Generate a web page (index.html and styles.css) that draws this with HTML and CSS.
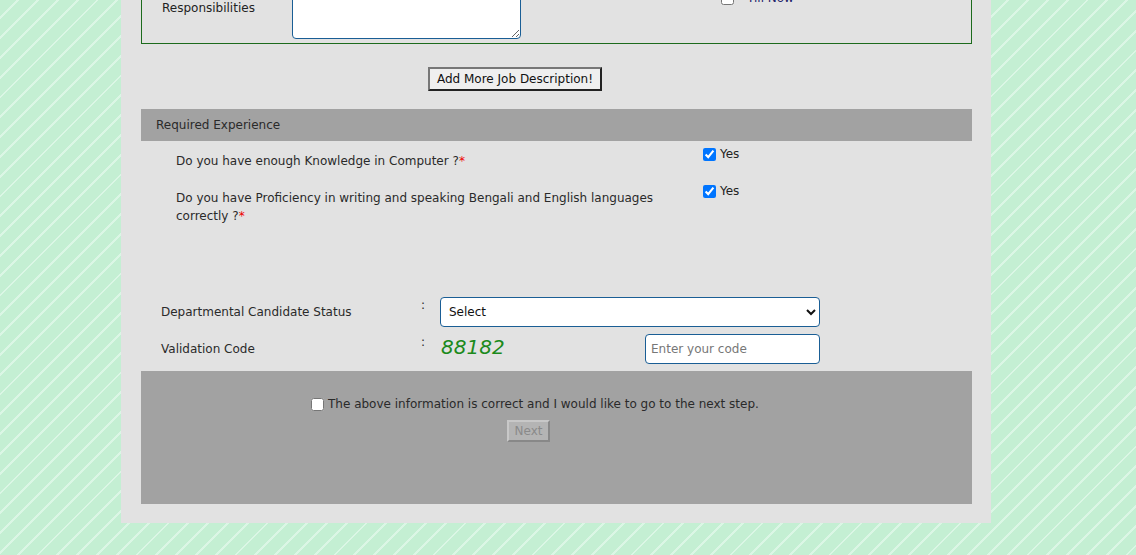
FILE: index.html
```html
<!DOCTYPE html>
<html>
<head>
<meta charset="utf-8">
<link rel="stylesheet" href="styles.css">
</head>
<body>
<div class="page">
  <div class="jobbox">
    <div class="job-row">
      <label class="job-label">Responsibilities</label>
      <textarea class="job-text"></textarea>
      <label class="till"><input type="checkbox" class="till-box"><span class="till-text">Till Now</span></label>
    </div>
  </div>

  <div class="add-row">
    <button class="add-btn">Add More Job Description!</button>
  </div>

  <div class="band">Required Experience</div>

  <div class="q-row q-first">
    <div class="q-text">Do you have enough Knowledge in Computer ?<span class="req">*</span></div>
    <label class="q-ans"><input type="checkbox" checked><span>Yes</span></label>
  </div>
  <div class="q-row">
    <div class="q-text">Do you have Proficiency in writing and speaking Bengali and English languages correctly ?<span class="req">*</span></div>
    <label class="q-ans"><input type="checkbox" checked><span>Yes</span></label>
  </div>

  <div class="form-rows">
    <div class="f-row">
      <div class="f-label">Departmental Candidate Status</div>
      <div class="f-colon">:</div>
      <select class="f-select"><option>Select</option></select>
    </div>
    <div class="f-row">
      <div class="f-label">Validation Code</div>
      <div class="f-colon">:</div>
      <div class="captcha">88182</div>
      <input class="code-input" type="text" placeholder="Enter your code">
    </div>
  </div>

  <div class="submit-panel">
    <label class="agree"><input type="checkbox"><span>The above information is correct and I would like to go to the next step.</span></label>
    <div class="next-row"><button class="next-btn" disabled>Next</button></div>
  </div>
</div>
</body>
</html>
```

FILE: styles.css
```css
html, body {
  margin: 0;
  padding: 0;
}
body {
  background-color: #c4efd3;
  background-image: repeating-linear-gradient(135deg, #c4efd3 0px, #c4efd3 12px, #dbf6e5 12px, #dbf6e5 14px);
  font-family: "DejaVu Sans", Verdana, sans-serif;
  font-size: 12px;
  color: #222;
  overflow: hidden;
  height: 555px;
}
.page {
  width: 831px;
  margin-left: 121px;
  margin-top: -43px;
  padding: 0 19px 19px 20px;
  background: #e2e2e2;
}
.jobbox {
  border: 1px solid #1c6b1c;
  padding: 0 0 4px 20px;
}
.job-row {
  display: flex;
  align-items: flex-start;
}
.job-label {
  width: 130px;
  margin-top: 42px;
  line-height: 16px;
  color: #222;
}
.job-text {
  box-sizing: border-box;
  width: 229px;
  height: 70px;
  margin: 11px 0 0 0;
  border: 1px solid #1a5e95;
  border-radius: 4px;
  background: #fff;
  resize: vertical;
}
.till {
  display: flex;
  align-items: center;
  margin: 32px 0 0 200px;
  line-height: 16px;
}
.till-box {
  margin: 0 13px 0 0;
  width: 13px;
  height: 13px;
}
.till-text {
  color: #23236b;
}
.add-row {
  padding: 23px 0 0 287px;
  height: 42px;
}
.add-btn {
  font-family: "DejaVu Sans", Verdana, sans-serif;
  font-size: 12px;
  height: 24px;
  width: 174px;
  padding: 0;
  background: #efefef;
  color: #111;
  border: 2px solid;
  border-color: #777 #222 #222 #777;
}
.band {
  height: 32px;
  line-height: 32px;
  padding-left: 15px;
  background: #a2a2a2;
  color: #2a2a2a;
}
.q-row {
  display: flex;
  align-items: flex-start;
}
.q-text {
  width: 490px;
  padding: 11px 0 8px 35px;
  line-height: 18px;
  color: #2a2a2a;
}
.req {
  color: #e00;
}
.q-ans {
  display: flex;
  align-items: center;
  margin: 6px 0 0 34px;
  line-height: 14px;
}
.q-ans input {
  margin: 0 4px 0 3px;
  width: 13px;
  height: 13px;
}
.form-rows {
  padding: 64px 0 7px 0;
  display: flex;
  flex-direction: column;
  gap: 7px;
}
.f-row {
  display: flex;
  align-items: flex-start;
  height: 30px;
}
.f-label {
  width: 260px;
  padding: 7px 0 0 20px;
  line-height: 16px;
  color: #2a2a2a;
}
.f-colon {
  width: 19px;
  line-height: 16px;
  color: #2a2a2a;
}
.f-select {
  box-sizing: border-box;
  width: 380px;
  height: 30px;
  border: 1px solid #1a5e95;
  border-radius: 4px;
  background: #fff;
  padding-left: 4px;
  font-family: "DejaVu Sans", Verdana, sans-serif;
  font-size: 12px;
  color: #111;
}
.captcha {
  width: 204px;
  padding-left: 1px;
  font-style: italic;
  font-size: 20px;
  line-height: 26px;
  color: #1c8a1c;
}
.code-input {
  box-sizing: border-box;
  width: 175px;
  height: 30px;
  margin: 0;
  border: 1px solid #1a5e95;
  border-radius: 4px;
  padding: 0 5px;
  font-family: "DejaVu Sans", Verdana, sans-serif;
  font-size: 12px;
  background: #fff;
}
.code-input::placeholder {
  color: #777;
}
.submit-panel {
  height: 133px;
  background: #a2a2a2;
  box-sizing: border-box;
  padding-top: 26px;
}
.agree {
  display: flex;
  align-items: center;
  padding-left: 167px;
  line-height: 14px;
  color: #2a2a2a;
}
.agree input {
  margin: 0 4px 0 3px;
  width: 13px;
  height: 13px;
}
.next-row {
  padding: 9px 0 0 366px;
}
.next-btn {
  font-family: "DejaVu Sans", Verdana, sans-serif;
  font-size: 12px;
  width: 43px;
  height: 22px;
  padding: 0;
  color: #8a8a8a;
  background: #b4b4b4;
  border: 2px solid;
  border-color: #c8c8c8 #888 #888 #c8c8c8;
}
```
